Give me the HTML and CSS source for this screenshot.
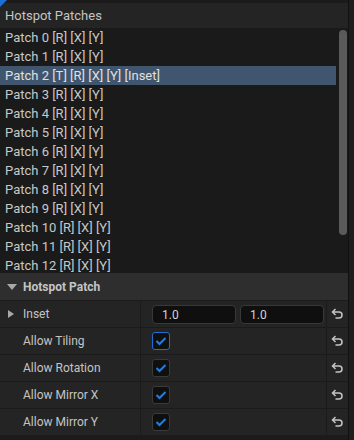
FILE: index.html
```html
<!DOCTYPE html>
<html lang="en">
<head>
<meta charset="UTF-8">
<title>Hotspot Patches</title>
<link rel="stylesheet" href="styles.css">
</head>
<body>

<div class="frame">
  <div class="main">
    <div class="corner"></div>
    <div class="title">Hotspot Patches</div>

    <div class="list">
      <div class="item">Patch 0 [R] [X] [Y]</div>
      <div class="item">Patch 1 [R] [X] [Y]</div>
      <div class="item selected">Patch 2 [T] [R] [X] [Y] [Inset]</div>
      <div class="item">Patch 3 [R] [X] [Y]</div>
      <div class="item">Patch 4 [R] [X] [Y]</div>
      <div class="item">Patch 5 [R] [X] [Y]</div>
      <div class="item">Patch 6 [R] [X] [Y]</div>
      <div class="item">Patch 7 [R] [X] [Y]</div>
      <div class="item">Patch 8 [R] [X] [Y]</div>
      <div class="item">Patch 9 [R] [X] [Y]</div>
      <div class="item">Patch 10 [R] [X] [Y]</div>
      <div class="item">Patch 11 [R] [X] [Y]</div>
      <div class="item">Patch 12 [R] [X] [Y]</div>
      <div class="item">Patch 13 [R] [X] [Y]</div>
      <div class="scrollbar"></div>
    </div>

    <div class="section">
      <span class="arrow-down"></span>
      <span class="section-name">Hotspot Patch</span>
    </div>

    <div class="row">
      <div class="label"><span class="arrow-right"></span><span>Inset</span></div>
      <div class="value">
        <div class="input">1.0</div>
        <div class="input">1.0</div>
      </div>
      <div class="reset"><svg width="13" height="12" viewBox="0 0 13 12"><path d="M4.5 1 L1.5 4 L4.5 7 M1.5 4 H8 A3 3 0 0 1 8 10 H4.5" fill="none" stroke="#c4c4c4" stroke-width="1.5"/></svg></div>
    </div>

    <div class="row">
      <div class="label">Allow Tiling</div>
      <div class="value">
        <div class="check focused"><svg width="18" height="18" viewBox="0 0 18 18"><path d="M4.5 9 L7.5 12 L13.5 6" fill="none" stroke="#1f7fe6" stroke-width="2"/></svg></div>
      </div>
      <div class="reset"><svg width="13" height="12" viewBox="0 0 13 12"><path d="M4.5 1 L1.5 4 L4.5 7 M1.5 4 H8 A3 3 0 0 1 8 10 H4.5" fill="none" stroke="#c4c4c4" stroke-width="1.5"/></svg></div>
    </div>

    <div class="row">
      <div class="label">Allow Rotation</div>
      <div class="value">
        <div class="check"><svg width="18" height="18" viewBox="0 0 18 18"><path d="M4.5 9 L7.5 12 L13.5 6" fill="none" stroke="#1f7fe6" stroke-width="2"/></svg></div>
      </div>
      <div class="reset"><svg width="13" height="12" viewBox="0 0 13 12"><path d="M4.5 1 L1.5 4 L4.5 7 M1.5 4 H8 A3 3 0 0 1 8 10 H4.5" fill="none" stroke="#c4c4c4" stroke-width="1.5"/></svg></div>
    </div>

    <div class="row">
      <div class="label">Allow Mirror X</div>
      <div class="value">
        <div class="check"><svg width="18" height="18" viewBox="0 0 18 18"><path d="M4.5 9 L7.5 12 L13.5 6" fill="none" stroke="#1f7fe6" stroke-width="2"/></svg></div>
      </div>
      <div class="reset"><svg width="13" height="12" viewBox="0 0 13 12"><path d="M4.5 1 L1.5 4 L4.5 7 M1.5 4 H8 A3 3 0 0 1 8 10 H4.5" fill="none" stroke="#c4c4c4" stroke-width="1.5"/></svg></div>
    </div>

    <div class="row">
      <div class="label">Allow Mirror Y</div>
      <div class="value">
        <div class="check"><svg width="18" height="18" viewBox="0 0 18 18"><path d="M4.5 9 L7.5 12 L13.5 6" fill="none" stroke="#1f7fe6" stroke-width="2"/></svg></div>
      </div>
      <div class="reset"><svg width="13" height="12" viewBox="0 0 13 12"><path d="M4.5 1 L1.5 4 L4.5 7 M1.5 4 H8 A3 3 0 0 1 8 10 H4.5" fill="none" stroke="#c4c4c4" stroke-width="1.5"/></svg></div>
    </div>
  </div>
  <div class="rail"></div>
</div>

</body>
</html>
```

FILE: styles.css
```css
body {
  margin: 0;
  background-color: #151515;
  font-family: Roboto, "Noto Sans", sans-serif;
  color: #c4c4c4;
}

.frame {
  display: flex;
  width: 354px;
  height: 440px;
  overflow: hidden;
}

.main {
  position: relative;
  width: 348px;
  padding-top: 3px;
  background-color: #1b1b1b;
  border-right: 1px solid #111111;
}

.rail {
  flex: 1;
  background-color: #1e1e1e;
}

/* little blue corner in the top left */
.corner {
  position: absolute;
  top: 0;
  left: 0;
  width: 0;
  height: 0;
  border-top: 7px solid #1a6fd8;
  border-right: 7px solid transparent;
}

.title {
  height: 25px;
  line-height: 25px;
  padding-left: 5px;
  font-size: 13px;
  background-color: #242424;
}

.list {
  position: relative;
  height: 245px;
  overflow: hidden;
  background-color: #1a1a1a;
}

.item {
  width: 336px;
  height: 19px;
  line-height: 19px;
  padding-left: 5px;
  box-sizing: border-box;
  font-size: 13px;
  color: #c8c8c8;
  white-space: nowrap;
}

.item.selected {
  background-color: #40566e;
  color: #e0e0e0;
}

.scrollbar {
  position: absolute;
  top: 2px;
  right: 1px;
  width: 8px;
  height: 205px;
  border-radius: 4px;
  background-color: #5a5a5a;
}

.section {
  display: flex;
  align-items: center;
  height: 27px;
  padding-left: 7px;
  background-color: #2e2e2e;
  border-bottom: 1px solid #1b1b1b;
}

.section-name {
  font-size: 12px;
  font-weight: bold;
}

.arrow-down {
  width: 0;
  height: 0;
  margin-right: 6px;
  border-left: 5px solid transparent;
  border-right: 5px solid transparent;
  border-top: 6px solid #a8a8a8;
}

.row {
  display: flex;
  height: 26px;
  background-color: #242424;
  border-bottom: 1px solid #1b1b1b;
}

.label {
  position: relative;
  display: flex;
  align-items: center;
  width: 141px;
  padding-left: 23px;
  box-sizing: border-box;
  font-size: 12px;
  border-right: 1px solid #1b1b1b;
}

.arrow-right {
  position: absolute;
  left: 8px;
  top: 9px;
  width: 0;
  height: 0;
  border-top: 4px solid transparent;
  border-bottom: 4px solid transparent;
  border-left: 6px solid #a8a8a8;
}

.value {
  display: flex;
  align-items: center;
  gap: 4px;
  width: 186px;
  padding-left: 11px;
  box-sizing: border-box;
  border-right: 1px solid #1b1b1b;
}

.input {
  width: 84px;
  height: 19px;
  line-height: 19px;
  padding-left: 9px;
  box-sizing: border-box;
  font-size: 12px;
  color: #d4d4d4;
  background-color: #0f0f0f;
  border: 1px solid #383838;
  border-radius: 4px;
}

.check {
  width: 18px;
  height: 18px;
  box-sizing: border-box;
  background-color: #0f0f0f;
  border: 1px solid #3a3a3a;
  border-radius: 3px;
}

.check svg {
  display: block;
  margin: -1px;
}

.check.focused {
  border-color: #1f6fd0;
}

.reset {
  flex: 1;
  display: flex;
  align-items: center;
  justify-content: center;
}
```
